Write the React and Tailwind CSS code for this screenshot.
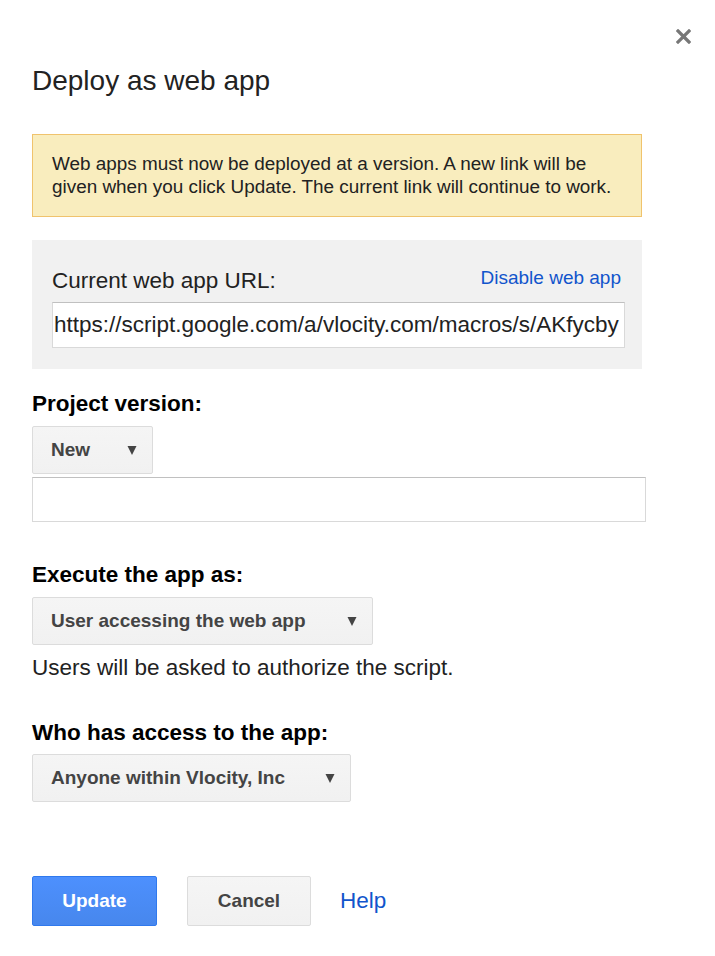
import React from "react";

const font = { fontFamily: '"Liberation Sans", Arial, sans-serif' };

const Arrow = () => (
  <svg width="10" height="12" viewBox="0 0 10 12" className="shrink-0">
    <path d="M0.5 2 L9.5 2 L5 11 Z" fill="#444" />
  </svg>
);

const Select = ({ label, width }) => (
  <div
    className={`flex items-center justify-between h-[48px] pl-[18px] pr-[15px] bg-linear-to-b from-[#f5f5f5] to-[#f1f1f1] border border-[#dcdcdc] rounded-[2px] text-[19px] font-bold text-[#444] ${width}`}
  >
    <span>{label}</span>
    <Arrow />
  </div>
);

const Label = ({ children, className = "" }) => (
  <div className={`text-[22.5px] leading-[26px] font-bold text-black ${className}`}>{children}</div>
);

export default function App() {
  return (
    <div className="relative w-[715px] h-[956px] bg-white overflow-hidden" style={font}>
      <button className="absolute left-[676px] top-[29px] w-[15px] h-[15px]">
        <svg width="15" height="15" viewBox="0 0 15 15">
          <path d="M2 2 L13 13 M13 2 L2 13" stroke="#777" strokeWidth="3.2" strokeLinecap="square" />
        </svg>
      </button>

      <div className="pl-[32px] pt-[64px]">
        <h1 className="text-[28px] leading-[34px] text-[#222]">Deploy as web app</h1>

        <div className="mt-[36px] w-[610px] h-[83px] bg-[#f9edbe] border border-[#f0c36d] pl-[19px] pt-[17px] text-[18.9px] leading-[23px] text-[#222]">
          Web apps must now be deployed at a version. A new link will be
          <br />
          given when you click Update. The current link will continue to work.
        </div>

        <div className="mt-[23px] w-[610px] h-[129px] bg-[#f1f1f1] pl-[20px] pr-[17px] pt-[28px]">
          <div className="flex justify-between items-start">
            <span className="text-[22.5px] leading-[26px] text-[#222]">Current web app URL:</span>
            <a className="text-[19px] leading-[20px] text-[#1155cc] mr-[4px]">Disable web app</a>
          </div>
          <div className="mt-[8px] h-[46px] bg-white border border-[#d9d9d9] border-t-[#c0c0c0] flex items-center overflow-hidden whitespace-nowrap pl-[1px] text-[22.5px] text-[#222]">
            https://script.google.com/a/vlocity.com/macros/s/AKfycby
          </div>
        </div>

        <Label className="mt-[22px]">Project version:</Label>
        <div className="mt-[9px]">
          <Select label="New" width="w-[121px]" />
        </div>
        <div className="mt-[3px] w-[614px] h-[45px] bg-white border border-[#d9d9d9] border-t-[#c0c0c0]" />

        <Label className="mt-[40px]">Execute the app as:</Label>
        <div className="mt-[9px]">
          <Select label="User accessing the web app" width="w-[341px]" />
        </div>
        <div className="mt-[10px] text-[22.5px] leading-[26px] text-[#222]">
          Users will be asked to authorize the script.
        </div>

        <Label className="mt-[39px]">Who has access to the app:</Label>
        <div className="mt-[8px]">
          <Select label="Anyone within Vlocity, Inc" width="w-[319px]" />
        </div>

        <div className="mt-[74px] flex items-center">
          <button className="w-[125px] h-[50px] bg-linear-to-b from-[#4d90fe] to-[#4787ed] border border-[#3079ed] rounded-[2px] text-white font-bold text-[19px]">
            Update
          </button>
          <button className="ml-[30px] w-[124px] h-[50px] bg-linear-to-b from-[#f5f5f5] to-[#f1f1f1] border border-[#dcdcdc] rounded-[2px] text-[#444] font-bold text-[19px]">
            Cancel
          </button>
          <a className="ml-[29px] text-[22.5px] text-[#1155cc]">Help</a>
        </div>
      </div>
    </div>
  );
}
